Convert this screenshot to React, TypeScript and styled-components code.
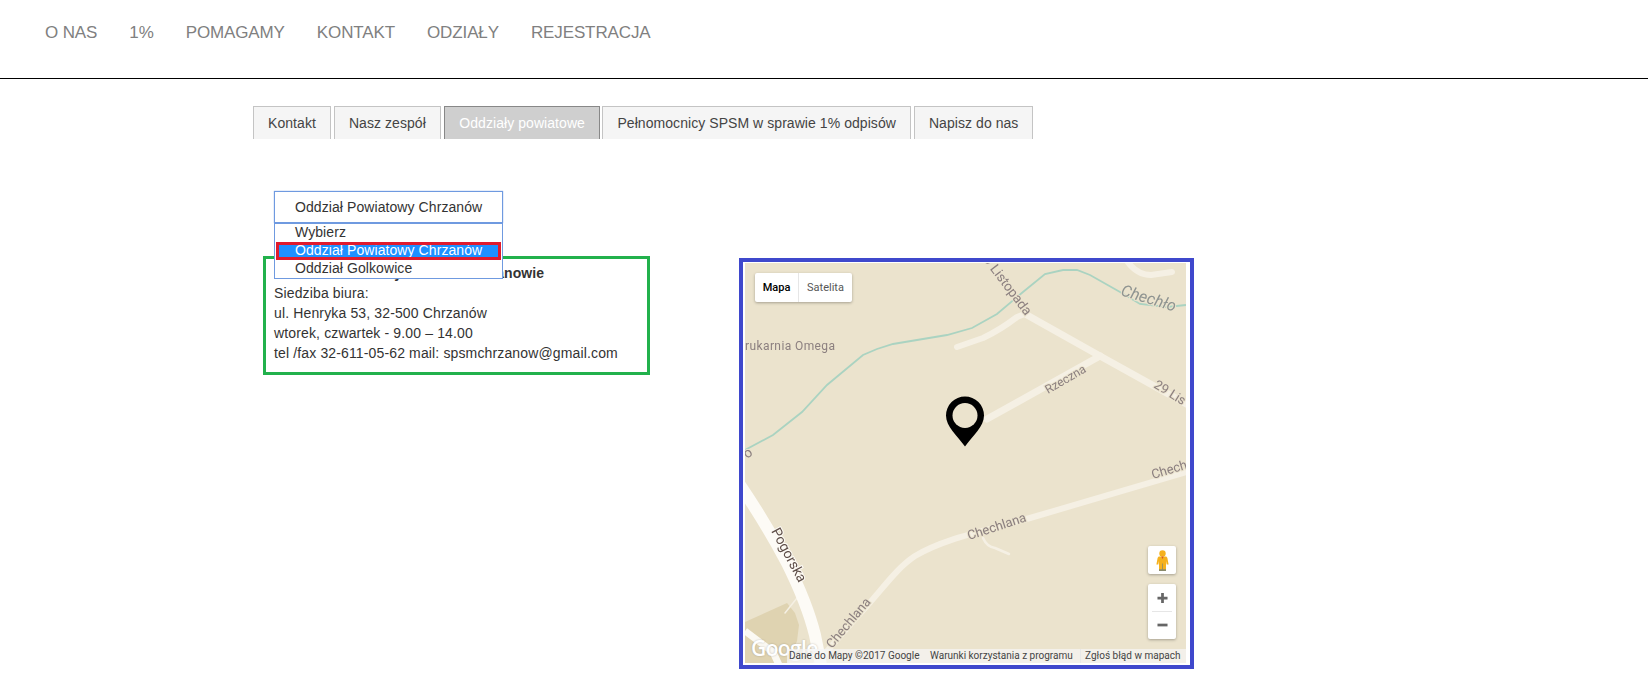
import styled, { createGlobalStyle } from "styled-components";

const GlobalStyle = createGlobalStyle`
  html, body {
    margin: 0;
    padding: 0;
    background: #fff;
    font-family: "Liberation Sans", Arial, sans-serif;
  }
`;

const Header = styled.header`
  height: 79px;
  box-sizing: border-box;
  border-bottom: 1px solid #000;
  padding: 0 0 13px 45px;
  display: flex;
  align-items: center;
  gap: 32px;
`;

const NavLink = styled.a`
  font-size: 17px;
  letter-spacing: -0.12px;
  color: #808080;
  text-transform: uppercase;
`;

const Main = styled.main`
  padding: 27px 0 0 253px;
`;

const Tabs = styled.ul`
  display: flex;
  gap: 3px;
  list-style: none;
  margin: 0;
  padding: 0;
`;

const Tab = styled.li<{ $active?: boolean }>`
  height: 33px;
  box-sizing: border-box;
  padding: 0 ${(p) => (p.$active ? "14.5px" : "14px")};
  margin-right: ${(p) => (p.$active ? "-1px" : "0")};
  display: flex;
  align-items: center;
  font-size: 14px;
  letter-spacing: 0.06px;
  color: ${(p) => (p.$active ? "#fff" : "#444")};
  background: ${(p) => (p.$active ? "#cfcfcf" : "#f5f5f5")};
  border: 1px solid ${(p) => (p.$active ? "#888" : "#c4c4c4")};
  border-bottom: 0;
`;

const Content = styled.section`
  margin: 52px 0 0 10px;
`;

const SelectBox = styled.div`
  position: relative;
  width: 229px;
  height: 32px;
  margin-left: 11px;
  box-sizing: border-box;
  border: 1px solid #6f9ae0;
  box-shadow: 0 0 1px #6f9ae0;
  padding-left: 20px;
  display: flex;
  align-items: center;
  font-size: 14px;
  letter-spacing: 0.08px;
  color: #333;
`;

const Dropdown = styled.div`
  position: absolute;
  top: 31px;
  left: -1px;
  width: 229px;
  height: 56px;
  box-sizing: border-box;
  background: #fff;
  border: 1px solid #6f9ae0;
  z-index: 2;
`;

const Option = styled.div<{ $selected?: boolean }>`
  height: 18px;
  line-height: ${(p) => (p.$selected ? "11px" : "16px")};
  box-sizing: border-box;
  padding-left: ${(p) => (p.$selected ? "16px" : "20px")};
  margin: ${(p) => (p.$selected ? "0 1px" : "0")};
  color: ${(p) => (p.$selected ? "#fff" : "#333")};
  background: ${(p) => (p.$selected ? "#1e90ff" : "transparent")};
  border: ${(p) => (p.$selected ? "3px solid #e01b2d" : "0")};
  overflow: hidden;
  white-space: nowrap;
`;

const Row = styled.div`
  display: flex;
  align-items: flex-start;
  gap: 89px;
  margin-top: 33px;
`;

const InfoBox = styled.div`
  width: 387px;
  box-sizing: border-box;
  border: 3px solid #22b14c;
  padding: 4px 8px 9px;
  font-size: 14px;
  line-height: 20px;
  letter-spacing: 0.14px;
  color: #333;
`;

const InfoTitle = styled.div`
  font-weight: 700;
  letter-spacing: 0.07px;
`;

const MapFrame = styled.div`
  margin-top: 2px;
  width: 455px;
  height: 411px;
  box-sizing: border-box;
  border: 4px solid #3f48cc;
  padding: 1px 4px 2px 2px;
`;

const MapCanvas = styled.div`
  position: relative;
  width: 441px;
  height: 400px;
  overflow: hidden;
  background: #ebe3cd;
`;

const MapDrawing = styled.svg`
  display: block;
  font-family: Roboto, sans-serif;
  filter: blur(0.3px);
`;

const MapTypeControl = styled.div`
  position: absolute;
  top: 10px;
  left: 10px;
  height: 29px;
  display: flex;
  background: #fff;
  border-radius: 2px;
  box-shadow: 0 1px 3px rgba(0, 0, 0, 0.3);
  font-family: Roboto, sans-serif;
  font-size: 11px;
`;

const MapTypeButton = styled.div<{ $active?: boolean }>`
  width: ${(p) => (p.$active ? "43px" : "53px")};
  display: flex;
  align-items: center;
  justify-content: center;
  color: ${(p) => (p.$active ? "#000" : "#565656")};
  font-weight: ${(p) => (p.$active ? 500 : 400)};
  border-right: ${(p) => (p.$active ? "1px solid #e6e6e6" : "0")};
`;

const ControlBox = styled.div<{ $bottom: number; $height: number }>`
  position: absolute;
  right: 10px;
  bottom: ${(p) => p.$bottom}px;
  width: 28px;
  height: ${(p) => p.$height}px;
  background: #fff;
  border-radius: 2px;
  box-shadow: 0 1px 3px rgba(0, 0, 0, 0.3);
  display: flex;
  flex-direction: column;
  align-items: center;
  justify-content: center;
`;

const ZoomDivider = styled.div`
  width: 20px;
  height: 1px;
  background: #e6e6e6;
`;

const ZoomGlyph = styled.svg`
  display: block;
  margin: 8.5px 0;
`;

const GoogleMark = styled.div`
  position: absolute;
  left: 6px;
  bottom: 1px;
  font-family: "Open Sans", sans-serif;
  font-size: 21px;
  font-weight: 600;
  letter-spacing: -0.6px;
  color: #fff;
  text-shadow: 0 0 2px rgba(0, 0, 0, 0.25);
`;

const Attribution = styled.div`
  position: absolute;
  right: 0;
  bottom: 0;
  left: 42px;
  height: 14px;
  display: flex;
  align-items: center;
  background: rgba(245, 245, 245, 0.72);
  font-family: Roboto, sans-serif;
  font-size: 10px;
  color: #444;
  white-space: nowrap;
`;

const AttributionItem = styled.span<{ $width: number; $divided?: boolean }>`
  box-sizing: border-box;
  width: ${(p) => p.$width}px;
  padding-left: 4px;
  line-height: 14px;
  border-left: ${(p) => (p.$divided ? "1px solid #e8e8e8" : "0")};

  &:first-child {
    padding-left: 2px;
  }
`;

const Pegman = () => (
  <svg width="13" height="21" viewBox="0 0 13 21">
    <circle cx="6.5" cy="3.4" r="3.2" fill="#f5b11d" />
    <path d="M3.4 6.6h6.2c1 0 1.5.6 1.8 1.5l1.2 6.4h-1.9l-.7-3.6v9.2H3v-9.2l-.7 3.6H.4l1.2-6.4c.3-.9.8-1.5 1.8-1.5z" fill="#f5b11d" />
    <path d="M5.3 6.6h2.4L6.5 9z" fill="#d4552a" />
    <path d="M6.1 13.5h.8v6.5h-.8zM3 19.2h7V21H3z" fill="#8a8a6a" />
  </svg>
);

const MapArt = () => (
  <MapDrawing width="441" height="400" viewBox="0 0 441 400">
    <path d="M0 359L42 340L50 350L54 362L52 378L43 400H0z" fill="#dfd3b1" />
    <g fill="none" stroke="#f5f0e4" strokeLinecap="round" strokeLinejoin="round">
      <path d="M282 52L355 93L445 143" strokeWidth="7" />
      <path d="M212 84L238 75Q255 67 272 54L282 50" strokeWidth="6" />
      <path d="M355 93L242 156" strokeWidth="7" />
      <path d="M382 -2Q392 12 406 12L427 9" strokeWidth="6" />
      <path d="M445 208L285 255C240 268 200 275 170 293C150 306 135 330 110 356L70 402" strokeWidth="6" />
      <path d="M238 275Q242 284 250 285L264 291" strokeWidth="2.5" />
      <path d="M40 350L52 335" strokeWidth="1.5" />
    </g>
    <path d="M0 368L28 389L34 402" fill="none" stroke="#fbf9f3" strokeWidth="7" />
    <path d="M-5 222Q22 262 42 300Q62 340 70 372L76 402" fill="none" stroke="#fdfbf6" strokeWidth="12" />
    <path
      d="M0 187L28 172L57 149L82 122L118 92L132 86L148 81L202 72L227 65L252 51L278 29L300 11L318 7L332 7L345 12L375 29L395 41L422 44L441 42"
      fill="none"
      stroke="#aad3c1"
      strokeWidth="1.8"
    />
    <g fill="#8b7f7f" stroke="#ebe3cd" strokeWidth="2" paintOrder="stroke" fontSize="12">
      <text transform="translate(238 -3) rotate(53)" fontSize="13.5">9 Listopada</text>
      <text transform="translate(375 32) rotate(17)" fontSize="16" fontStyle="italic" fill="#8e9390">Chechło</text>
      <text x="0" y="87" letterSpacing="0.4">rukarnia Omega</text>
      <text transform="translate(303 131) rotate(-30)">Rzeczna</text>
      <text transform="translate(408 124) rotate(32)" fontSize="13">29 Lis</text>
      <text transform="translate(2 196) rotate(-35)" fontSize="14">o</text>
      <text transform="translate(408 216) rotate(-17)" fontSize="13">Chech</text>
      <text transform="translate(224 277) rotate(-18)" fontSize="13">Chechlana</text>
      <text transform="translate(87 386) rotate(-50)" fontSize="13">Chechlana</text>
      <text transform="translate(26 268) rotate(62)" fontSize="14" fill="#5e4e48" stroke="#fdfbf6">Pogorska</text>
    </g>
    <path
      d="M220 133.5a19 19 0 0 1 19 19c0 11-11 20-19 31c-8-11-19-20-19-31a19 19 0 0 1 19-19z"
      fill="#000"
    />
    <circle cx="220" cy="152.5" r="12.5" fill="#ebe3cd" />
  </MapDrawing>
);

export default function App() {
  return (
    <>
      <GlobalStyle />
      <Header>
        {["O nas", "1%", "Pomagamy", "Kontakt", "Odziały", "Rejestracja"].map((item) => (
          <NavLink key={item}>{item}</NavLink>
        ))}
      </Header>
      <Main>
        <Tabs>
          <Tab>Kontakt</Tab>
          <Tab>Nasz zespół</Tab>
          <Tab $active>Oddziały powiatowe</Tab>
          <Tab>Pełnomocnicy SPSM w sprawie 1% odpisów</Tab>
          <Tab>Napisz do nas</Tab>
        </Tabs>
        <Content>
          <SelectBox>
            Oddział Powiatowy Chrzanów
            <Dropdown>
              <Option>Wybierz</Option>
              <Option $selected>Oddział Powiatowy Chrzanów</Option>
              <Option>Oddział Golkowice</Option>
            </Dropdown>
          </SelectBox>
          <Row>
            <InfoBox>
              <InfoTitle>Oddział Powiatowy SPSM w Chrzanowie</InfoTitle>
              Siedziba biura:
              <br />
              ul. Henryka 53, 32-500 Chrzanów
              <br />
              wtorek, czwartek - 9.00 – 14.00
              <br />
              tel /fax 32-611-05-62 mail: spsmchrzanow@gmail.com
            </InfoBox>
            <MapFrame>
              <MapCanvas>
                <MapArt />
                <MapTypeControl>
                  <MapTypeButton $active>Mapa</MapTypeButton>
                  <MapTypeButton>Satelita</MapTypeButton>
                </MapTypeControl>
                <ControlBox $bottom={89} $height={28}>
                  <Pegman />
                </ControlBox>
                <ControlBox $bottom={24} $height={55}>
                  <ZoomGlyph width="11" height="11" viewBox="0 0 11 11">
                    <path d="M0 5.5h11M5.5 0v11" stroke="#666" strokeWidth="3" />
                  </ZoomGlyph>
                  <ZoomDivider />
                  <ZoomGlyph width="11" height="11" viewBox="0 0 11 11">
                    <path d="M0 5.5h11" stroke="#666" strokeWidth="3" />
                  </ZoomGlyph>
                </ControlBox>
                <GoogleMark>Google</GoogleMark>
                <Attribution>
                  <AttributionItem $width={139}>Dane do Mapy ©2017 Google</AttributionItem>
                  <AttributionItem $width={154}>Warunki korzystania z programu</AttributionItem>
                  <AttributionItem $width={102} $divided>Zgłoś błąd w mapach</AttributionItem>
                </Attribution>
              </MapCanvas>
            </MapFrame>
          </Row>
        </Content>
      </Main>
    </>
  );
}
